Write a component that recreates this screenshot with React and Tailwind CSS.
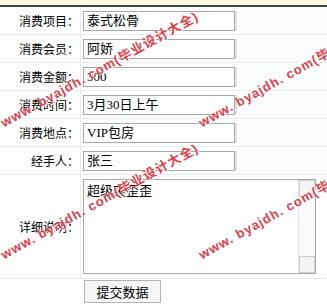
import React from 'react';

const rows = [
  { label: '消费项目：', value: '泰式松骨' },
  { label: '消费会员：', value: '阿娇' },
  { label: '消费金额：', value: '300' },
  { label: '消费时间：', value: '3月30日上午' },
  { label: '消费地点：', value: 'VIP包房' },
  { label: '经手人：', value: '张三' },
];

const font = { fontFamily: '"Liberation Serif", "Noto Sans CJK SC", serif' };
const cjk = { fontFamily: '"Noto Sans CJK SC", sans-serif' };

const Watermark = ({ left, top }) => (
  <div
    className="absolute whitespace-nowrap text-[13px] tracking-[1px] font-bold text-[#e0404c] origin-left -rotate-[29deg] pointer-events-none [text-shadow:0_0_1px_#fff,1px_1px_0_#fff]"
    style={{ left, top, fontFamily: '"Liberation Sans", "Noto Sans CJK SC", sans-serif' }}
  >
    www. byajdh. com(毕业设计大全)
  </div>
);

const App = () => {
  return (
    <div className="relative w-[327px] h-[304px] overflow-hidden bg-white text-black" style={font}>
      {/* barra superior */}
      <div className="h-[5px] bg-[#fdfce0]" />
      <div className="h-[2px] bg-[#3c4646]" />

      {rows.map((r) => (
        <div key={r.label} className="flex h-[28px] border-b border-[#ececec] bg-[#fbfdfe]">
          <div className="w-[81px] flex items-center justify-end pr-[1px] text-[12px] border-r border-[#ececec] bg-white" style={cjk}>
            {r.label}
          </div>
          <div className="flex items-center pl-[2px]">
            <div className="w-[152px] h-[20px] border border-[#a8a8a8] bg-white flex items-center pl-[3px] text-[13px] shadow-[2px_0_0_#e4e4e4]">
              {r.value}
            </div>
          </div>
        </div>
      ))}

      {/* detalle */}
      <div className="flex h-[104px] border-b border-[#ececec]">
        <div className="w-[81px] flex items-center justify-end pr-[1px] text-[12px] border-r border-[#ececec]" style={cjk}>
          详细说明：
        </div>
        <div className="flex items-center pl-[2px]">
          <div className="w-[233px] h-[95px] border border-[#a8a8a8] bg-white flex">
            <div className="flex-1 pl-[3px] pt-[3px] text-[13px] leading-[16px]">超级爽歪歪</div>
            <div className="w-[17px] flex flex-col justify-between border-l border-[#e6e6e6] bg-[#fafafa]">
              <div className="h-[17px] border border-[#cfcfcf] bg-[#f4f4f4]" />
              <div className="h-[17px] border border-[#cfcfcf] bg-[#f4f4f4]" />
            </div>
          </div>
        </div>
      </div>

      {/* botón */}
      <div className="flex h-[25px] items-center">
        <div className="w-[84px]" />
        <button className="w-[77px] h-[23px] border border-[#b4b4b4] bg-[#f6f6f6] text-[13px] flex items-center justify-center" style={cjk}>
          提交数据
        </button>
      </div>

      <Watermark left={2} top={114} />
      <Watermark left={200} top={114} />
      <Watermark left={2} top={246} />
      <Watermark left={200} top={246} />
    </div>
  );
};

export default App;
